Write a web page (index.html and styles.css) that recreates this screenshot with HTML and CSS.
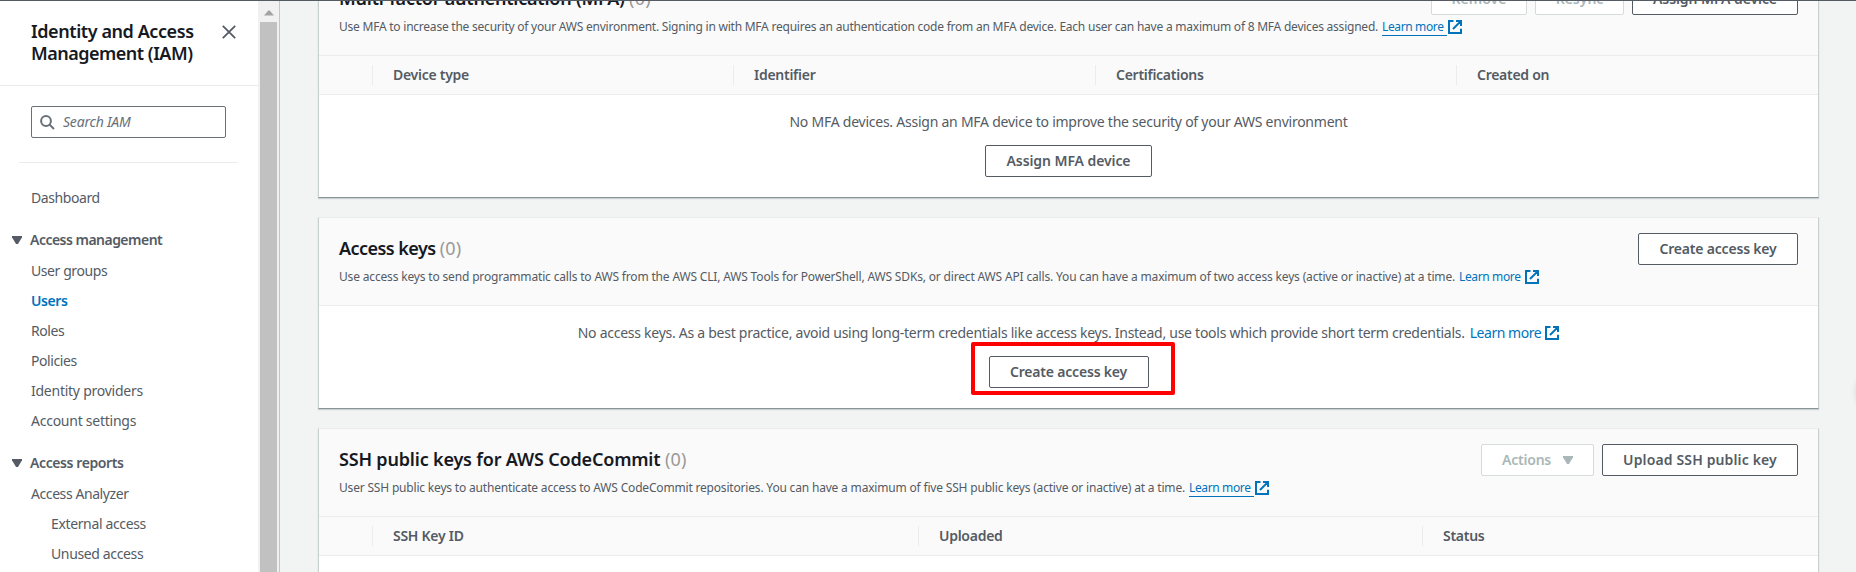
FILE: index.html
```html
<!DOCTYPE html>
<html lang="en">
<head>
<meta charset="utf-8">
<title>IAM - Security credentials</title>
<link rel="stylesheet" href="styles.css">
</head>
<body>
<svg class="defs" aria-hidden="true">
  <symbol id="external" viewBox="0 0 14 14">
    <path d="M5.5 1H1v12h12V8.7M8 1h5v5M12.6 1.4 5 9" fill="none" stroke="currentColor" stroke-width="2"/>
  </symbol>
  <symbol id="caret" viewBox="0 0 10 8">
    <path d="M0 0h10v1.2L6 8H4L0 1.2z" fill="currentColor"/>
  </symbol>
</svg>
<div class="app">
  <aside class="sidebar">
    <div class="side-head">
      <h2 class="side-title"><span class="t-iam1">Identity and Access</span><br><span class="t-iam2">Management (IAM)</span></h2>
      <svg class="close" viewBox="0 0 14 14"><path d="M.8.8l12.4 12.4M13.2.8.8 13.2" fill="none" stroke="currentColor" stroke-width="1.8"/></svg>
    </div>
    <div class="side-body">
      <div class="search">
        <svg class="search-icon" viewBox="0 0 15 15"><circle cx="6" cy="6" r="4.9" fill="none" stroke="currentColor" stroke-width="2"/><path d="M9.6 9.6l4.4 4.4" stroke="currentColor" stroke-width="2"/></svg>
        <span class="placeholder">Search IAM</span>
      </div>
      <hr class="side-rule">
      <nav class="nav">
        <a class="item first">Dashboard</a>
        <div class="group g-mgmt"><svg class="caret"><use href="#caret"/></svg>Access management</div>
        <a class="item">User groups</a>
        <a class="item active">Users</a>
        <a class="item">Roles</a>
        <a class="item">Policies</a>
        <a class="item wide">Identity providers</a>
        <a class="item wide">Account settings</a>
        <div class="group"><svg class="caret"><use href="#caret"/></svg>Access reports</div>
        <a class="item">Access Analyzer</a>
        <a class="item sub">External access</a>
        <a class="item sub">Unused access</a>
      </nav>
    </div>
  </aside>
  <div class="scrollbar">
    <svg class="arrow" viewBox="0 0 10 6"><path d="M0 5.5 4.3.5h1.4L10 5.5z" fill="#a3a3a3"/></svg>
    <div class="thumb"></div>
  </div>
  <main class="main">
    <div class="panels">
      <section class="panel">
        <header class="panel-head">
          <div class="row">
            <h3 class="title t-mfa">Multi-factor authentication (MFA) <span class="count">(0)</span></h3>
            <div class="actions"><button class="btn disabled b-remove">Remove</button><button class="btn disabled b-resync">Resync</button><button class="btn b-assign">Assign MFA device</button></div>
          </div>
          <p class="desc"><span class="d-mfa">Use MFA to increase the security of your AWS environment. Signing in with MFA requires an authentication code from an MFA device. Each user can have a maximum of 8 MFA devices assigned.</span><a class="link underlined"><span class="label">Learn more</span><svg class="ext"><use href="#external"/></svg></a></p>
        </header>
        <div class="cols mfa-cols">
          <span></span><span class="col">Device type</span><span class="col">Identifier</span><span class="col">Certifications</span><span class="col">Created on</span>
        </div>
        <div class="empty">
          <p class="msg"><span class="m-mfa">No MFA devices. Assign an MFA device to improve the security of your AWS environment</span></p>
          <button class="btn b-assign-c">Assign MFA device</button>
        </div>
      </section>
      <section class="panel">
        <header class="panel-head">
          <div class="row">
            <h3 class="title t-keys">Access keys <span class="count">(0)</span></h3>
            <div class="actions"><button class="btn b-create">Create access key</button></div>
          </div>
          <p class="desc"><span class="d-keys">Use access keys to send programmatic calls to AWS from the AWS CLI, AWS Tools for PowerShell, AWS SDKs, or direct AWS API calls. You can have a maximum of two access keys (active or inactive) at a time.</span><a class="link"><span class="label">Learn more</span><svg class="ext"><use href="#external"/></svg></a></p>
        </header>
        <div class="empty">
          <p class="msg"><span class="m-keys">No access keys. As a best practice, avoid using long-term credentials like access keys. Instead, use tools which provide short term credentials.</span><a class="link big"><span class="label">Learn more</span><svg class="ext"><use href="#external"/></svg></a></p>
          <div class="marked"><button class="btn b-create">Create access key</button><span class="highlight"></span></div>
        </div>
      </section>
      <section class="panel last">
        <header class="panel-head">
          <div class="row">
            <h3 class="title t-ssh">SSH public keys for AWS CodeCommit <span class="count">(0)</span></h3>
            <div class="actions"><button class="btn disabled b-actions">Actions<svg class="caret"><use href="#caret"/></svg></button><button class="btn b-upload">Upload SSH public key</button></div>
          </div>
          <p class="desc"><span class="d-ssh">User SSH public keys to authenticate access to AWS CodeCommit repositories. You can have a maximum of five SSH public keys (active or inactive) at a time.</span><a class="link underlined"><span class="label">Learn more</span><svg class="ext"><use href="#external"/></svg></a></p>
        </header>
        <div class="cols ssh-cols">
          <span></span><span class="col">SSH Key ID</span><span class="col">Uploaded</span><span class="col">Status</span>
        </div>
        <div class="empty"></div>
      </section>
    </div>
    <span class="edge-knob"></span>
  </main>
</div>
</body>
</html>
```
FILE: styles.css
```css
* { box-sizing: border-box; }
body, h2, h3, p { margin: 0; }
body {
  font: 14px/22px "Noto Sans", "Open Sans", sans-serif;
  color: #545b64;
}
.defs { position: absolute; width: 0; height: 0; }
.app {
  display: flex;
  height: 572px;
  overflow: hidden;
  border-top: 1px solid #545b64;
  background: #f2f3f3;
}

/* Sidebar */
.sidebar { width: 258px; flex: none; background: #fff; }
.side-head {
  display: flex;
  justify-content: space-between;
  height: 85px;
  padding: 19px 22px 0 31px;
  border-bottom: 1px solid #eaeded;
}
.side-title { font-size: 18px; font-weight: 600; color: #16191f; white-space: nowrap; }
.t-iam1 { letter-spacing: -.42px; }
.t-iam2 { letter-spacing: -.5px; }
.close { width: 14px; height: 14px; margin-top: 5px; color: #545b64; }
.search {
  display: flex;
  align-items: center;
  width: 195px;
  height: 32px;
  margin: 20px 0 0 31px;
  padding-left: 8px;
  border: 1px solid #687078;
  border-radius: 2px;
}
.search-icon { width: 15px; height: 15px; color: #687078; }
.placeholder { margin-left: 8px; font-style: italic; color: #687078; letter-spacing: -.2px; }
.side-rule { height: 1px; margin: 24px 20px 0 19px; border: 0; background: #eaeded; }
.nav { padding-top: 24px; }
.item { display: block; height: 22px; margin-top: 8px; padding-left: 31px; letter-spacing: -.42px; }
.item.first { margin-top: 0; }
.item.wide { letter-spacing: -.25px; }
.item.sub { padding-left: 51px; letter-spacing: -.36px; }
.item.active { font-weight: 600; color: #0073bb; }
.group {
  display: flex;
  align-items: center;
  height: 22px;
  margin: 20px 0 9px;
  padding-left: 12px;
  font-weight: 600;
  letter-spacing: -.4px;
}
.group + .item { margin-top: 9px; }
.g-mgmt { letter-spacing: -.52px; }
.caret { width: 10px; height: 8px; }
.group .caret { margin-right: 8px; }

.scrollbar { width: 22px; flex: none; background: #f1f1f1; border-right: 1px solid #c6c6c6; padding-left: 2px; }
.arrow { display: block; width: 10px; height: 6px; margin: 9px 0 6px 4px; }
.thumb { width: 17px; height: 560px; background: #c1c1c1; }

/* Panels */
.main { position: relative; flex: 1; overflow: hidden; }
.panels { display: flex; flex-direction: column; gap: 19px; margin: -34px 37px 0 38px; }
.panel {
  flex: none;
  height: 192px;
  background: #fff;
  border: 1px solid #c9d0d0;
  border-top-color: #eaeded;
  border-bottom-color: #879596;
  box-shadow: 0 1px 1px rgba(0, 28, 36, .16);
}
.panel:first-child { height: 231px; }
.panel-head { height: 88px; padding: 15px 20px 0; background: #fafafa; border-bottom: 1px solid #eaeded; }
.row { display: flex; justify-content: space-between; height: 32px; }
.title { font-size: 18px; font-weight: 600; line-height: 30px; color: #16191f; white-space: nowrap; }
.count { font-weight: 400; color: #999; letter-spacing: .2px; }
.t-mfa { letter-spacing: -.22px; }
.t-keys { letter-spacing: -.55px; }
.t-ssh { letter-spacing: -.18px; }
.actions { display: flex; gap: 8px; }
.btn {
  display: flex;
  align-items: center;
  justify-content: center;
  height: 32px;
  padding: 0;
  font: 600 14px/20px "Noto Sans", "Open Sans", sans-serif;
  color: #545b64;
  background: #fff;
  border: 1px solid #545b64;
  border-radius: 2px;
}
.btn.disabled { color: #aab7b8; border-color: #d5dbdb; }
.b-remove { width: 96px; }
.b-resync { width: 89px; }
.b-assign { width: 166px; letter-spacing: -.08px; }
.b-assign-c { width: 167px; letter-spacing: -.08px; }
.b-create { width: 160px; letter-spacing: -.19px; }
.b-actions { width: 113px; gap: 12px; letter-spacing: -.2px; }
.b-upload { width: 196px; letter-spacing: .14px; }
.desc { display: flex; align-items: center; height: 16px; margin-top: 4px; font-size: 12px; line-height: 16px; white-space: nowrap; }
.d-mfa { letter-spacing: -.229px; }
.d-keys { letter-spacing: -.166px; }
.d-ssh { letter-spacing: -.184px; }
.link { display: inline-flex; align-items: center; margin-left: 4px; color: #0073bb; letter-spacing: -.37px; }
.link .label { padding-right: 4px; }
.underlined .label { position: relative; }
.underlined .label::after { content: ""; position: absolute; left: 0; right: 1px; bottom: -1px; height: 1px; background: #0073bb; }
.ext { width: 14px; height: 14px; }
.link.big { letter-spacing: -.46px; margin-left: 5px; }
.cols { display: grid; align-items: center; height: 39px; background: #fafafa; border-bottom: 1px solid #eaeded; font-weight: 600; letter-spacing: -.27px; }
.mfa-cols { grid-template-columns: 53px 361px 362px 361px 1fr; }
.ssh-cols { grid-template-columns: 53px 546px 504px 1fr; }
.col { height: 20px; padding-left: 20px; border-left: 1px solid #eaeded; line-height: 20px; }
.empty { display: flex; flex-direction: column; align-items: center; padding-top: 16px; }
.msg { display: flex; align-items: center; height: 22px; white-space: nowrap; margin-bottom: 12px; }
.m-mfa { letter-spacing: -.242px; }
.m-keys { letter-spacing: -.266px; }
.marked { position: relative; }
.highlight { position: absolute; inset: -14px -26px -7px -18px; border: 4px solid #fe0000; border-radius: 2px; }
.edge-knob { position: absolute; right: -40px; top: 371px; width: 40px; height: 40px; border-radius: 50%; box-shadow: 0 0 6px rgba(0, 0, 0, .12); }
```
